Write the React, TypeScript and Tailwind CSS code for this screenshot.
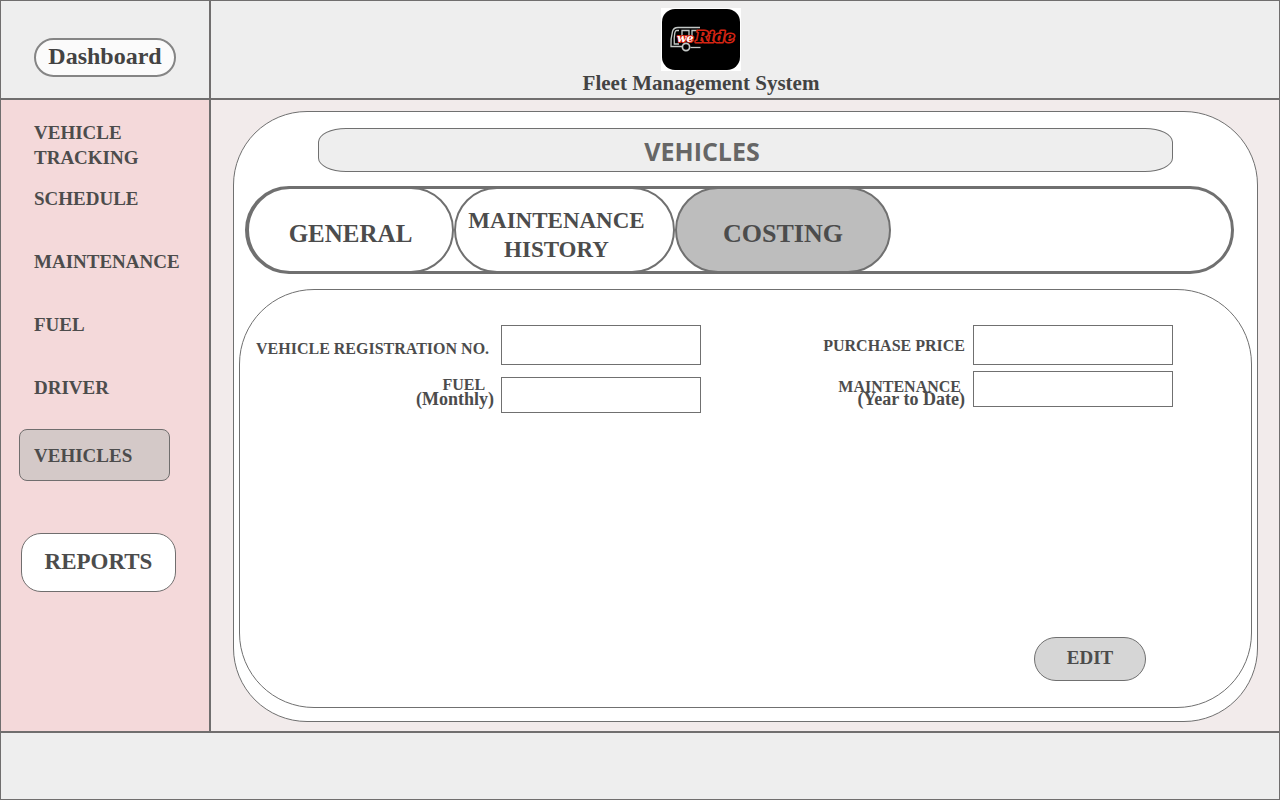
import { useState } from "react";

const navLinks = ["SCHEDULE", "MAINTENANCE", "FUEL", "DRIVER"];

function Logo() {
  return (
    <svg viewBox="0 0 80 63" role="img" aria-label="weRide" className="h-[63px] w-20">
      <rect width="80" height="63" fill="#fff" />
      <rect x="1" y="1" width="78" height="61" rx="13" fill="#000" />
      <g fill="none" stroke="#c4c8c6" strokeWidth="1.3">
        <path d="M39 19.500H17Q12.500 19.500 11.500 23.500Q9.500 31 10 38.500H21" />
        <path d="M29.500 39.500H39.500" />
        <path d="M18 22.500H15.500Q14.300 22.500 13.800 25Q12.800 30 13.300 36H18" />
        <path d="M21 28V22.500H28V28M31 28V22.500H37" />
        <circle cx="25" cy="39" r="3.600" strokeWidth="1.700" />
      </g>
      <text
        x="35"
        y="34"
        fontSize="15"
        fill="#000"
        stroke="#d42413"
        strokeWidth="3.200"
        strokeLinejoin="round"
        paintOrder="stroke"
        className="font-['DejaVu_Serif',serif] font-bold italic"
      >
        Ride
      </text>
      <text
        x="16"
        y="34"
        fontSize="11"
        fill="#fff"
        stroke="#d42413"
        strokeWidth="2"
        strokeLinejoin="round"
        paintOrder="stroke"
        className="font-['DejaVu_Serif',serif] font-bold italic"
      >
        we
      </text>
    </svg>
  );
}

function Header() {
  return (
    <header className="flex h-[99px] border-b-2 border-[#706e6e] bg-[#eeeeee]">
      <div className="flex w-[210px] shrink-0 items-start border-r-2 border-[#706e6e] pt-[37px] pl-[33px]">
        <a
          href="#dashboard"
          className="flex h-[39px] w-[142px] items-center justify-center rounded-full border-2 border-[#858585] bg-[#fbfbfb] pb-1 text-2xl leading-6 text-[#434343]"
        >
          Dashboard
        </a>
      </div>
      <div className="flex flex-1 flex-col items-center pt-[7px] pr-[88px]">
        <Logo />
        <h1 className="text-[21px] leading-6 text-[#434343]">Fleet Management System</h1>
      </div>
    </header>
  );
}

function Sidebar() {
  return (
    <nav
      aria-label="Main"
      className="flex w-[210px] shrink-0 flex-col items-start border-r-2 border-[#706e6e] bg-[#f4d9da] pt-5 text-[19px] leading-[25px]"
    >
      <a href="#tracking" className="ml-[33px] w-32">
        VEHICLE TRACKING
      </a>
      <div className="mt-4 ml-[33px] flex flex-col gap-[38px]">
        {navLinks.map((name) => (
          <a key={name} href={"#" + name.toLowerCase()}>
            {name}
          </a>
        ))}
      </div>
      <a
        href="#vehicles"
        aria-current="page"
        className="mt-[29px] ml-[18px] flex h-[52px] w-[151px] items-center rounded-lg border border-[#706e6e] bg-[#d4c9c8] pl-3.5"
      >
        VEHICLES
      </a>
      <a
        href="#reports"
        className="mt-[52px] ml-5 flex h-[59px] w-[155px] items-center justify-center rounded-[20px] border border-[#706e6e] bg-white pb-0.5 text-[23px]"
      >
        REPORTS
      </a>
    </nav>
  );
}

const tabs = [
  { name: "GENERAL", look: "-ml-px w-[207px] pt-1.5 text-[25px]" },
  { name: "MAINTENANCE HISTORY", look: "w-[221px] pt-2.5 pr-6 pl-2 text-[23px]" },
  { name: "COSTING", look: "w-[216px] pt-1.5 text-[26px]" },
];

function Tabs() {
  const [active, setActive] = useState("COSTING");
  return (
    <div
      role="tablist"
      className="mt-3.5 mr-[23px] ml-[11px] flex h-[88px] rounded-full border-[3px] border-[#707070] bg-white"
    >
      {tabs.map((tab) => (
        <button
          key={tab.name}
          type="button"
          role="tab"
          aria-selected={tab.name === active}
          onClick={() => setActive(tab.name)}
          className={
            "-my-0.5 rounded-full border-2 border-[#707070] leading-[29px] " +
            tab.look +
            (tab.name === active ? " bg-[#bdbdbd]" : " bg-white")
          }
        >
          {tab.name}
        </button>
      ))}
    </div>
  );
}

function CostingForm() {
  return (
    <form
      onSubmit={(event) => event.preventDefault()}
      className="mx-[5px] mt-[15px] mb-[13px] flex flex-1 flex-col rounded-[75px] border border-[#707070] bg-white pt-[35px] pb-[26px]"
    >
      <div className="flex justify-between pr-[78px] pl-4 text-base">
        <div className="flex flex-col gap-3">
          <div className="flex justify-end gap-[7px]">
            <label htmlFor="registration" className="pt-3 pr-[5px] leading-6">
              VEHICLE REGISTRATION NO.
            </label>
            <input id="registration" className="h-10 w-[200px] border border-[#707070] bg-white px-2" />
          </div>
          <div className="flex justify-end gap-[7px]">
            <label htmlFor="fuel" className="flex flex-col items-end leading-[15px]">
              <span className="pr-[9px]">FUEL</span>
              <span className="text-lg leading-[15px]">(Monthly)</span>
            </label>
            <input id="fuel" className="h-9 w-[200px] border border-[#707070] bg-white px-2" />
          </div>
        </div>
        <div className="flex flex-col gap-1.5">
          <div className="flex justify-end gap-2">
            <label htmlFor="price" className="pt-[9px] leading-6">
              PURCHASE PRICE
            </label>
            <input id="price" className="h-10 w-[200px] border border-[#707070] bg-white px-2" />
          </div>
          <div className="flex justify-end gap-2">
            <label htmlFor="maintenance" className="flex flex-col items-end pt-2.5 leading-3">
              <span className="pr-1">MAINTENANCE</span>
              <span className="text-lg leading-3">(Year to Date)</span>
            </label>
            <input id="maintenance" className="h-9 w-[200px] border border-[#707070] bg-white px-2" />
          </div>
        </div>
      </div>
      <button
        type="submit"
        className="mt-auto mr-[105px] h-11 w-28 self-end rounded-full border border-[#707070] bg-[#d6d6d6] pb-0.5 text-[19px] leading-6"
      >
        EDIT
      </button>
    </form>
  );
}

export default function App() {
  return (
    <div className="flex min-h-screen flex-col border border-[#706e6e] font-['Liberation_Serif',serif] font-bold text-[#4c4c4c]">
      <Header />
      <div className="flex flex-1">
        <Sidebar />
        <main className="flex flex-1 flex-col bg-[#f2ebeb] pt-[11px] pr-[21px] pb-[9px] pl-[22px]">
          <section className="flex flex-1 flex-col rounded-[74px] border border-[#707070] bg-white">
            <h2 className="mx-[84px] mt-4 flex h-11 items-center justify-center rounded-[28px/14px] border border-[#707070] bg-[#eeeeee] pt-0.5 pr-[87px] font-['Open_Sans',sans-serif] text-[25px] leading-8 font-bold text-[#666666]">
              VEHICLES
            </h2>
            <Tabs />
            <CostingForm />
          </section>
        </main>
      </div>
      <footer className="h-[68px] border-t-2 border-[#706e6e] bg-[#eeeeee]" />
    </div>
  );
}
